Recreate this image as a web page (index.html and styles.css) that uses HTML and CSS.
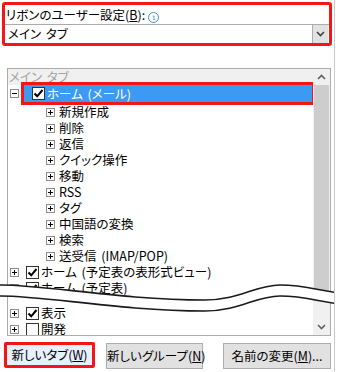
FILE: index.html
```html
<!DOCTYPE html>
<html lang="ja">
<head>
    <meta charset="UTF-8">
    <title>リボンのユーザー設定</title>
    <link rel="stylesheet" href="styles.css">
</head>
<body>

<div class="dialog">
    <div class="ribbon-box">
        <div class="ribbon-label">リボンのユーザー設定(<u>B</u>):<span class="info">i</span></div>
        <div class="combo">
            <span class="combo-text">メイン タブ</span>
            <span class="combo-btn">
                <svg width="9" height="6" viewBox="0 0 9 6"><path d="M1 1 L4.5 4.5 L8 1" fill="none" stroke="#404040" stroke-width="1.6"/></svg>
            </span>
        </div>
    </div>

    <div class="tree-box">
        <div class="tree">
            <div class="tree-head">メイン タブ</div>

            <div class="row top selected-row">
                <span class="expander minus"></span>
                <span class="highlight">
                    <span class="check on"><svg width="11" height="11" viewBox="0 0 11 11"><path d="M1.5 5.5 L4.2 8.3 L9.5 2" fill="none" stroke="#000" stroke-width="2"/></svg></span>
                    <span class="label">ホーム (メール)</span>
                </span>
            </div>

            <div class="row sub"><span class="expander"></span><span class="label">新規作成</span></div>
            <div class="row sub"><span class="expander"></span><span class="label">削除</span></div>
            <div class="row sub"><span class="expander"></span><span class="label">返信</span></div>
            <div class="row sub"><span class="expander"></span><span class="label">クイック操作</span></div>
            <div class="row sub"><span class="expander"></span><span class="label">移動</span></div>
            <div class="row sub"><span class="expander"></span><span class="label">RSS</span></div>
            <div class="row sub"><span class="expander"></span><span class="label">タグ</span></div>
            <div class="row sub"><span class="expander"></span><span class="label">中国語の変換</span></div>
            <div class="row sub"><span class="expander"></span><span class="label">検索</span></div>
            <div class="row sub"><span class="expander"></span><span class="label">送受信 (IMAP/POP)</span></div>

            <div class="row top">
                <span class="expander"></span>
                <span class="check on"><svg width="11" height="11" viewBox="0 0 11 11"><path d="M1.5 5.5 L4.2 8.3 L9.5 2" fill="none" stroke="#000" stroke-width="2"/></svg></span>
                <span class="label">ホーム (予定表の表形式ビュー)</span>
            </div>
            <div class="row top cut">
                <span class="expander"></span>
                <span class="check on"><svg width="11" height="11" viewBox="0 0 11 11"><path d="M1.5 5.5 L4.2 8.3 L9.5 2" fill="none" stroke="#000" stroke-width="2"/></svg></span>
                <span class="label">ホーム (予定表)</span>
            </div>
            <div class="row top after-cut">
                <span class="expander"></span>
                <span class="check on"><svg width="11" height="11" viewBox="0 0 11 11"><path d="M1.5 5.5 L4.2 8.3 L9.5 2" fill="none" stroke="#000" stroke-width="2"/></svg></span>
                <span class="label">表示</span>
            </div>
            <div class="row top">
                <span class="expander"></span>
                <span class="check"></span>
                <span class="label">開発</span>
            </div>
        </div>

        <div class="scrollbar">
            <div class="sb-arrow">
                <svg width="9" height="6" viewBox="0 0 9 6"><path d="M1 5 L4.5 1.5 L8 5" fill="none" stroke="#606060" stroke-width="1.6"/></svg>
            </div>
            <div class="sb-thumb"></div>
            <div class="sb-track"></div>
            <div class="sb-arrow">
                <svg width="9" height="6" viewBox="0 0 9 6"><path d="M1 1 L4.5 4.5 L8 1" fill="none" stroke="#606060" stroke-width="1.6"/></svg>
            </div>
        </div>
    </div>

    <div class="buttons">
        <button class="btn focused">新しいタブ(<u>W</u>)</button>
        <button class="btn group">新しいグループ(<u>N</u>)</button>
        <button class="btn rename">名前の変更(<u>M</u>)...</button>
    </div>

    <!-- 省略を示す波線 -->
    <svg class="wave" width="338" height="44" viewBox="0 0 338 44">
        <path d="M-2 9 C40 8 120 24 205 24 C240 24 255 9 280 9 C305 9 320 15 340 17 L340 28 C320 26 305 20 280 20 C255 20 240 35 205 35 C120 35 40 19 -2 20 Z" fill="#fff"/>
        <path d="M-2 9 C40 8 120 24 205 24 C240 24 255 9 280 9 C305 9 320 15 340 17" fill="none" stroke="#1a1a1a" stroke-width="1.6"/>
        <path d="M-2 20 C40 19 120 35 205 35 C240 35 255 20 280 20 C305 20 320 26 340 28" fill="none" stroke="#1a1a1a" stroke-width="1.6"/>
    </svg>
</div>

</body>
</html>
```

FILE: styles.css
```css
body {
    margin: 0;
    padding: 0;
    background-color: white;
    font-family: "Noto Sans CJK JP", "Noto Sans", sans-serif;
    font-size: 12.5px;
    line-height: 16px;
    font-feature-settings: "palt";
    word-spacing: 2px;
    color: #000;
}

.dialog {
    position: relative;
    width: 334px;
    height: 372px;
    border-right: 1px solid #c8c8c8;
    overflow: hidden;
}

/* リボンのユーザー設定 */
.ribbon-box {
    margin: 2px 2px 0 2px;
    border: 3px solid #f21616;
    border-radius: 3px;
}

.ribbon-label {
    height: 19px;
    line-height: 19px;
    padding-left: 1px;
    white-space: nowrap;
}

.info {
    display: inline-block;
    width: 9px;
    height: 9px;
    margin-left: 3px;
    border: 1px solid #4a8fd8;
    border-radius: 50%;
    color: #4a8fd8;
    font-family: "DejaVu Serif", serif;
    font-size: 8px;
    line-height: 9px;
    text-align: center;
    vertical-align: 0;
}

.combo {
    display: flex;
    align-items: stretch;
    height: 18px;
    border-top: 1px solid #acacac;
}

.combo-text {
    flex: 1;
    padding-left: 3px;
    line-height: 18px;
}

.combo-btn {
    display: flex;
    align-items: center;
    justify-content: center;
    width: 15px;
    margin-right: 1px;
    background-color: #e2e2e2;
    border-left: 1px solid #acacac;
}

/* ツリー */
.tree-box {
    display: flex;
    width: 322px;
    height: 266px;
    margin: 22px 0 0 7px;
    border: 1px solid #acacac;
    overflow: hidden;
}

.tree {
    flex: 1;
    overflow: hidden;
}

.tree-head {
    height: 16px;
    line-height: 16px;
    padding-left: 1px;
    background-color: #f0f0f0;
    color: #a3a3a3;
    white-space: nowrap;
}

.row {
    display: flex;
    align-items: center;
    height: 16px;
    line-height: 16px;
    white-space: nowrap;
}

.row.top {
    padding-left: 2px;
}

.row.sub {
    padding-left: 38px;
}

.row.sub .label {
    margin-left: 4px;
}

.row.top .check {
    margin-left: 7px;
}

.row.top .label {
    margin-left: 2px;
}

.row.cut {
    margin-top: 0;
}

.row.after-cut {
    margin-top: 9px;
}

.expander {
    position: relative;
    width: 9px;
    height: 9px;
    box-sizing: border-box;
    border: 1px solid #8e8e8e;
    background-color: white;
    flex-shrink: 0;
}

.expander::before,
.expander::after {
    content: "";
    position: absolute;
    background-color: #000;
}

.expander::before {
    left: 1px;
    top: 3px;
    width: 5px;
    height: 1px;
}

.expander::after {
    left: 3px;
    top: 1px;
    width: 1px;
    height: 5px;
}

.expander.minus::after {
    display: none;
}

.check {
    display: flex;
    align-items: center;
    justify-content: center;
    width: 13px;
    height: 13px;
    box-sizing: border-box;
    border: 1px solid #333;
    background-color: white;
    flex-shrink: 0;
}

.selected-row {
    position: relative;
    z-index: 2;
    height: 17px;
    margin-bottom: 2px;
}

.highlight {
    display: flex;
    align-items: center;
    flex: 1;
    height: 17px;
    margin-left: 5px;
    margin-right: 1px;
    padding-left: 1px;
    background-color: #3c9af2;
    color: white;
    outline: 3px solid #f21616;
}

.highlight .label {
    margin-left: 4px;
}

/* スクロールバー */
.scrollbar {
    display: flex;
    flex-direction: column;
    width: 17px;
    background-color: #f0f0f0;
}

.sb-arrow {
    display: flex;
    align-items: center;
    justify-content: center;
    height: 16px;
}

.sb-thumb {
    height: 216px;
    margin: 0 1px;
    background-color: #cdcdcd;
}

.sb-track {
    flex: 1;
}

/* ボタン */
.buttons {
    display: flex;
    align-items: flex-start;
    margin: 6px 0 0 4px;
}

.btn {
    height: 26px;
    padding: 0;
    font-family: "Noto Sans CJK JP", "Noto Sans", sans-serif;
    font-size: 12.5px;
    line-height: 16px;
    font-feature-settings: "palt";
    color: #000;
    background-color: #e1e1e1;
    border: 1px solid #adadad;
    white-space: nowrap;
}

.btn.focused {
    width: 91px;
    background-color: #e5f1fb;
    border: 3px solid #f21616;
    border-radius: 2px;
}

.btn.group {
    width: 97px;
    margin: 1px 0 0 11px;
}

.btn.rename {
    width: 108px;
    margin: 1px 0 0 20px;
}

.wave {
    position: absolute;
    left: 0;
    top: 276px;
}
```
